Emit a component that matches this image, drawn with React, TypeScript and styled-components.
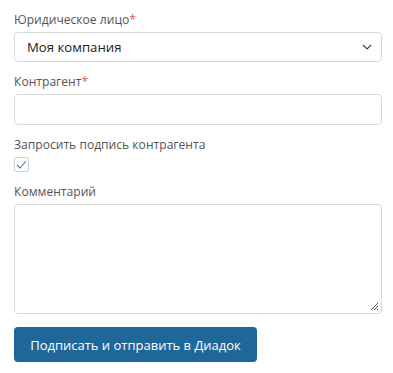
import React from "react";
import styled, { createGlobalStyle } from "styled-components";

const Global = createGlobalStyle`
  html, body { margin: 0; padding: 0; background: #fff; }
  body { font-family: "Open Sans", "Noto Sans", sans-serif; }
`;

const Form = styled.form`
  display: flex;
  flex-direction: column;
  padding: 10px 11px 0 14px;
  width: 368px;
`;

const Field = styled.div`
  display: flex;
  flex-direction: column;
  gap: 2px;
  margin-bottom: 10px;
`;

const Label = styled.label`
  font-size: 12.1px;
  line-height: 20px;
  color: #555;
`;

const Req = styled.span`
  color: #e05555;
`;

const SelectBox = styled.div`
  box-sizing: border-box;
  height: 30px;
  border: 1px solid #d9d9d9;
  border-radius: 4px;
  display: flex;
  align-items: center;
  justify-content: space-between;
  padding: 0 9px 0 12px;
  font-size: 13.2px;
  color: #222;
`;

const Input = styled.div`
  box-sizing: border-box;
  height: 31px;
  border: 1px solid #d9d9d9;
  border-radius: 4px;
`;

const Check = styled.div`
  box-sizing: border-box;
  width: 15px;
  height: 15px;
  border: 1px solid #cfcfcf;
  border-radius: 2px;
  display: flex;
  align-items: center;
  justify-content: center;
`;

const TextArea = styled.div`
  box-sizing: border-box;
  position: relative;
  height: 110px;
  border: 1px solid #d9d9d9;
  border-radius: 4px;
`;

const Grip = styled.svg`
  position: absolute;
  right: 2px;
  bottom: 2px;
`;

const Button = styled.button`
  align-self: flex-start;
  margin-top: 3px;
  height: 35px;
  width: 243px;
  border: none;
  border-radius: 4px;
  background: #1f6699;
  color: #fff;
  font-family: "Open Sans", "Noto Sans", sans-serif;
  font-size: 13px;
  font-weight: 500;
  padding: 0;
`;

export default function App() {
  return (
    <>
      <Global />
      <Form>
        <Field>
          <Label>
            Юридическое лицо<Req>*</Req>
          </Label>
          <SelectBox>
            <span>Моя компания</span>
            <svg width="10" height="6" viewBox="0 0 10 6">
              <path d="M1 1l4 4 4-4" fill="none" stroke="#444" strokeWidth="1.2" />
            </svg>
          </SelectBox>
        </Field>
        <Field>
          <Label>
            Контрагент<Req>*</Req>
          </Label>
          <Input />
        </Field>
        <Field>
          <Label>Запросить подпись контрагента</Label>
          <Check>
            <svg width="11" height="9" viewBox="0 0 11 9">
              <path d="M1 5l3 3 6-7" fill="none" stroke="#3b78b5" strokeWidth="1.1" />
            </svg>
          </Check>
        </Field>
        <Field>
          <Label>Комментарий</Label>
          <TextArea>
            <Grip width="9" height="9" viewBox="0 0 9 9">
              <path d="M8 1L1 8M8 4L4 8M8 7L7 8" stroke="#555" strokeWidth="1" />
            </Grip>
          </TextArea>
        </Field>
        <Button type="button">Подписать и отправить в Диадок</Button>
      </Form>
    </>
  );
}
